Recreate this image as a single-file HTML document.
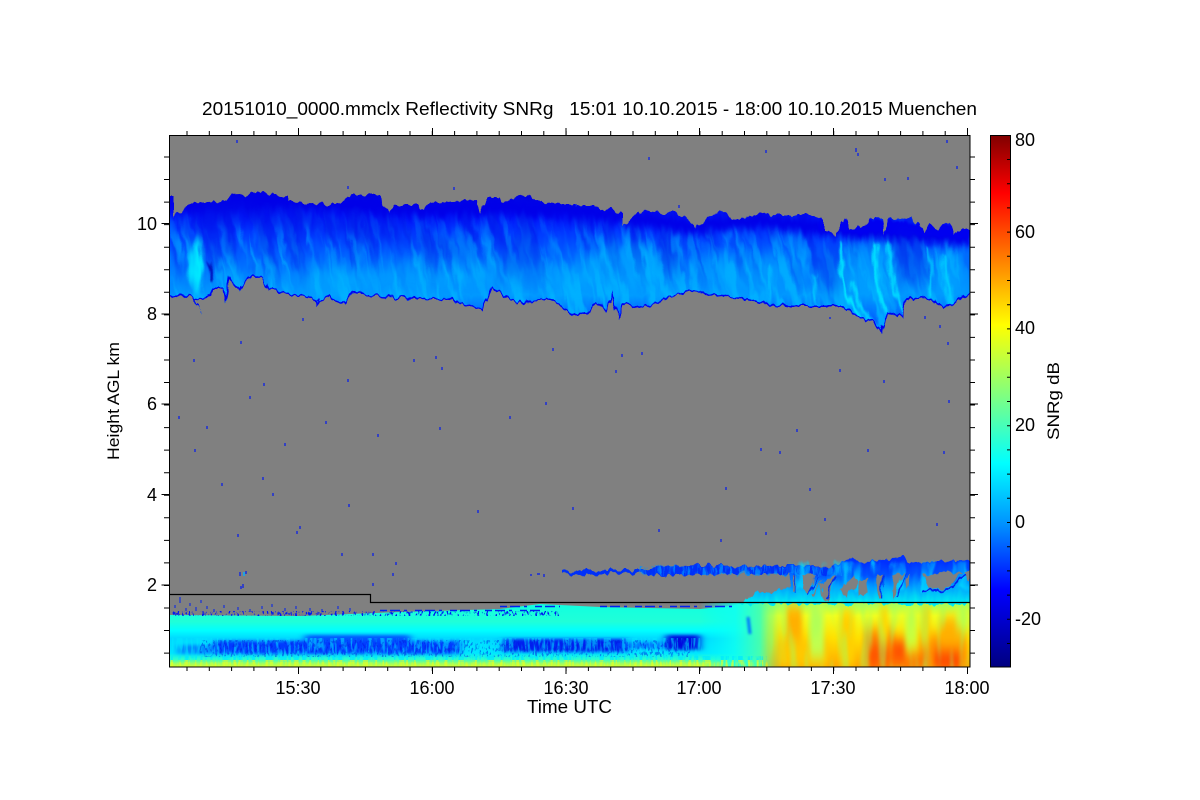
<!DOCTYPE html>
<html><head><meta charset="utf-8"><title>SNRg</title>
<style>
html,body{margin:0;padding:0;background:#fff}
svg{display:block}
text{font-family:"Liberation Sans",sans-serif;fill:#000;font-size:18px}
</style></head><body>
<svg xmlns="http://www.w3.org/2000/svg" width="1200" height="800" viewBox="0 0 1200 800">
<defs>
<linearGradient id="cb" gradientUnits="userSpaceOnUse" x1="0" y1="135" x2="0" y2="667">
<stop offset="0" stop-color="#800000"/><stop offset=".109" stop-color="#ff0000"/><stop offset=".235" stop-color="#ff8000"/><stop offset=".357" stop-color="#ffff00"/><stop offset=".489" stop-color="#80ff80"/><stop offset=".617" stop-color="#00ffff"/><stop offset=".733" stop-color="#0090ff"/><stop offset=".856" stop-color="#0000ff"/><stop offset="1" stop-color="#000080"/>
</linearGradient>
<linearGradient id="cl" gradientUnits="userSpaceOnUse" x1="0" y1="195" x2="0" y2="320">
<stop offset="0" stop-color="#0000e0"/><stop offset=".16" stop-color="#0010f8"/><stop offset=".3" stop-color="#0038ff"/><stop offset=".48" stop-color="#0060ff"/><stop offset=".66" stop-color="#0084ff"/><stop offset=".8" stop-color="#0098ff"/><stop offset="1" stop-color="#0060ff"/>
</linearGradient>
<linearGradient id="low" gradientUnits="userSpaceOnUse" x1="0" y1="604" x2="0" y2="667">
<stop offset="0" stop-color="#10ffe0"/><stop offset=".28" stop-color="#20ffd8"/><stop offset=".42" stop-color="#00ffff"/><stop offset=".55" stop-color="#00d8ff"/><stop offset=".78" stop-color="#00e8ff"/><stop offset=".88" stop-color="#30ffc8"/><stop offset=".95" stop-color="#a0ff60"/><stop offset="1" stop-color="#d0ff30"/>
</linearGradient>
<linearGradient id="warm" gradientUnits="userSpaceOnUse" x1="0" y1="603" x2="0" y2="667">
<stop offset="0" stop-color="#a0ff60"/><stop offset=".2" stop-color="#f0ff20"/><stop offset=".55" stop-color="#ffe000"/><stop offset="1" stop-color="#ffa800"/>
</linearGradient>
<linearGradient id="fade" gradientUnits="userSpaceOnUse" x1="760" y1="0" x2="782" y2="0">
<stop offset="0" stop-color="#fff" stop-opacity="0"/><stop offset="1" stop-color="#fff"/>
</linearGradient>
<mask id="fm" maskUnits="userSpaceOnUse" x="700" y="600" width="280" height="70"><rect x="700" y="600" width="280" height="70" fill="url(#fade)"/></mask>
<linearGradient id="mix" gradientUnits="userSpaceOnUse" x1="700" y1="0" x2="770" y2="0">
<stop offset="0" stop-color="#00ffff" stop-opacity="0"/><stop offset=".5" stop-color="#10fff0" stop-opacity=".85"/><stop offset="1" stop-color="#60ff90"/>
</linearGradient>
<linearGradient id="lc" gradientUnits="userSpaceOnUse" x1="0" y1="562" x2="0" y2="604">
<stop offset="0" stop-color="#0030ff"/><stop offset=".3" stop-color="#0050ff"/><stop offset=".6" stop-color="#00a0ff"/><stop offset="1" stop-color="#00f0f0"/>
</linearGradient>
<linearGradient id="mL" gradientUnits="userSpaceOnUse" x1="0" y1="205" x2="0" y2="300">
<stop offset="0" stop-color="#fff" stop-opacity="0"/><stop offset=".4" stop-color="#fff" stop-opacity=".55"/><stop offset="1" stop-color="#fff" stop-opacity=".85"/>
</linearGradient>
<linearGradient id="mD" gradientUnits="userSpaceOnUse" x1="0" y1="210" x2="0" y2="295">
<stop offset="0" stop-color="#fff" stop-opacity=".6"/><stop offset=".6" stop-color="#fff" stop-opacity=".35"/><stop offset="1" stop-color="#fff" stop-opacity="0"/>
</linearGradient>
<mask id="mask1" maskUnits="userSpaceOnUse" x="160" y="180" width="820" height="160"><rect x="160" y="180" width="820" height="160" fill="url(#mL)"/></mask>
<mask id="mask2" maskUnits="userSpaceOnUse" x="160" y="180" width="820" height="160"><rect x="160" y="180" width="820" height="160" fill="url(#mD)"/></mask>
<filter id="b1" filterUnits="userSpaceOnUse" x="100" y="100" width="1000" height="620" color-interpolation-filters="sRGB"><feGaussianBlur stdDeviation="1.3"/></filter>
<filter id="b2" filterUnits="userSpaceOnUse" x="100" y="100" width="1000" height="620" color-interpolation-filters="sRGB"><feGaussianBlur stdDeviation="2 4"/></filter>
<filter id="bf" filterUnits="userSpaceOnUse" x="100" y="100" width="1000" height="620" color-interpolation-filters="sRGB"><feGaussianBlur stdDeviation="2.5 7"/></filter>
<filter id="bb" filterUnits="userSpaceOnUse" x="100" y="100" width="1000" height="620" color-interpolation-filters="sRGB"><feGaussianBlur stdDeviation="4 1.5"/></filter>
<filter id="b4" filterUnits="userSpaceOnUse" x="100" y="100" width="1000" height="620" color-interpolation-filters="sRGB"><feGaussianBlur stdDeviation="7"/></filter>
<filter id="jag" filterUnits="userSpaceOnUse" x="100" y="100" width="1000" height="620" color-interpolation-filters="sRGB"><feTurbulence type="fractalNoise" baseFrequency=".16 .05" numOctaves="2" seed="5" result="n"/><feDisplacementMap in="SourceGraphic" in2="n" scale="9" xChannelSelector="G" yChannelSelector="R"/></filter>
<filter id="ns" filterUnits="userSpaceOnUse" x="-200" y="-200" width="1600" height="1200" color-interpolation-filters="sRGB"><feTurbulence type="fractalNoise" baseFrequency=".11 .012" numOctaves="3" seed="8"/><feColorMatrix type="matrix" values="0 0 0 0 0 0 0 0 0 0 0 0 0 0 0 5 0 0 0 -2.2" result="a"/><feComposite in="SourceGraphic" in2="a" operator="in"/><feGaussianBlur stdDeviation=".6"/></filter>
<filter id="ns2" filterUnits="userSpaceOnUse" x="-200" y="-200" width="1600" height="1200" color-interpolation-filters="sRGB"><feTurbulence type="fractalNoise" baseFrequency=".07 .01" numOctaves="3" seed="21"/><feColorMatrix type="matrix" values="0 0 0 0 0 0 0 0 0 0 0 0 0 0 0 5 0 0 0 -2.4" result="a"/><feComposite in="SourceGraphic" in2="a" operator="in"/><feGaussianBlur stdDeviation=".8"/></filter>
<filter id="nv" filterUnits="userSpaceOnUse" x="100" y="550" width="1000" height="130" color-interpolation-filters="sRGB"><feTurbulence type="fractalNoise" baseFrequency=".35 .06" numOctaves="2" seed="3"/><feColorMatrix type="matrix" values="0 0 0 0 0 0 0 0 0 0 0 0 0 0 0 5 0 0 0 -2.2" result="a"/><feComposite in="SourceGraphic" in2="a" operator="in"/></filter>
<filter id="nf" filterUnits="userSpaceOnUse" x="100" y="550" width="1000" height="130" color-interpolation-filters="sRGB"><feTurbulence type="fractalNoise" baseFrequency=".1 .018" numOctaves="2" seed="14"/><feColorMatrix type="matrix" values="0 0 0 0 0 0 0 0 0 0 0 0 0 0 0 5 0 0 0 -2.3" result="a"/><feComposite in="SourceGraphic" in2="a" operator="in"/><feGaussianBlur stdDeviation="1"/></filter>
<filter id="nd" filterUnits="userSpaceOnUse" x="100" y="550" width="1000" height="130" color-interpolation-filters="sRGB"><feTurbulence type="fractalNoise" baseFrequency=".45 .25" numOctaves="2" seed="9"/><feColorMatrix type="matrix" values="0 0 0 0 0 0 0 0 0 0 0 0 0 0 0 8 0 0 0 -4.3" result="a"/><feComposite in="SourceGraphic" in2="a" operator="in"/></filter>
<clipPath id="plot"><rect x="170" y="136" width="800" height="531"/></clipPath>
<clipPath id="cloud"><polygon points="169,195 173,195 173,217 185,208 190,203 223,202 233,195 267,193 287,197 290,202 337,205 353,195 380,195 383,203 390,213 395,205 417,205 422,210 430,203 477,200 480,213 487,198 500,198 503,203 517,197 527,195 543,203 560,205 593,205 600,210 610,209 623,215 623,227 640,210 650,212 660,213 677,213 687,218 697,228 710,215 725,213 733,220 747,217 763,213 777,215 813,215 823,220 823,230 837,235 845,218 850,230 867,223 872,218 883,218 885,235 888,220 910,218 920,223 923,232 930,223 937,230 948,222 953,235 958,230 970,230 975,230 975,293 970,293 953,305 943,307 927,298 907,300 903,318 888,312 881,333 873,322 853,315 843,307 787,307 727,297 693,292 667,298 650,307 637,310 625,305 619,320 613,297 608,313 597,303 585,315 570,313 568,312 550,300 518,303 503,297 493,288 483,312 472,308 450,300 383,298 353,293 342,305 327,297 318,305 317,300 297,295 268,290 263,277 250,278 240,290 230,280 225,302 222,290 213,290 210,297 195,300 200,313 192,298 165,295 165,195"/></clipPath>
</defs>

<rect width="1200" height="800" fill="#fff"/>
<rect x="169" y="135" width="801" height="532" fill="#808080"/>

<g clip-path="url(#plot)">
<!-- upper cloud -->
<g filter="url(#jag)">
<g clip-path="url(#cloud)">
<rect x="160" y="180" width="820" height="160" fill="url(#cl)"/>
<!-- broad soft tone -->
<g filter="url(#b4)" fill="#00a8ff">
<ellipse cx="420" cy="276" rx="60" ry="14" opacity=".6"/>
<ellipse cx="335" cy="282" rx="35" ry="15" opacity=".75"/>
<ellipse cx="625" cy="268" rx="48" ry="24" opacity=".8"/>
<ellipse cx="510" cy="275" rx="50" ry="15" opacity=".6"/>
<ellipse cx="745" cy="270" rx="55" ry="18" opacity=".6"/>
<ellipse cx="570" cy="285" rx="18" ry="15" opacity=".7"/>
<ellipse cx="880" cy="268" rx="42" ry="28" opacity=".65"/>
<ellipse cx="950" cy="270" rx="16" ry="24" opacity=".7"/>
</g>
<!-- streak texture -->
<g mask="url(#mask1)">
<g transform="rotate(-14 570 260)">
<rect x="0" y="40" width="1150" height="440" fill="#00b4ff" filter="url(#ns)"/>
</g>
</g>
<g mask="url(#mask2)">
<g transform="rotate(-14 570 260)">
<rect x="0" y="40" width="1150" height="440" fill="#0010e8" filter="url(#ns2)"/>
</g>
</g>
<!-- dark top edge -->
<path d="M169,203 L223,207 L267,198 L353,203 L380,205 L430,210 L500,206 L600,213 L690,226 L763,220 L823,228 L885,232 L970,238" fill="none" stroke="#0000e8" stroke-width="15" filter="url(#b2)"/>
<path d="M820,224 L970,232" fill="none" stroke="#0000f0" stroke-width="14" filter="url(#b1)"/>
<g filter="url(#b4)" fill="#0018e8">
<ellipse cx="340" cy="226" rx="70" ry="8" opacity=".55" transform="rotate(10 340 226)"/>
<ellipse cx="440" cy="245" rx="28" ry="7" opacity=".45" transform="rotate(30 440 245)"/>
<ellipse cx="830" cy="270" rx="7" ry="26" opacity=".6"/>
<ellipse cx="670" cy="258" rx="7" ry="18" opacity=".5" transform="rotate(-25 670 258)"/>
<ellipse cx="905" cy="258" rx="5" ry="28" opacity=".75"/>
<ellipse cx="920" cy="262" rx="5" ry="28" opacity=".6"/>
<ellipse cx="230" cy="215" rx="30" ry="10" opacity=".45"/>
</g>
<!-- bright features -->
<g filter="url(#b2)" fill="#00ecff">
<ellipse cx="198" cy="264" rx="4" ry="27"/>
<ellipse cx="191" cy="270" rx="3.5" ry="16" opacity=".7"/>
</g>
<path d="M209,262 L212,282" stroke="#0000b0" stroke-width="3" filter="url(#b1)"/>
<g fill="none" stroke="#00f0ff" filter="url(#b1)" stroke-linecap="round">
<path d="M841,245 C841,270 843,290 852,305 L862,318" stroke-width="3.5"/>
<path d="M853,282 C854,300 862,312 878,328" stroke-width="2.8" opacity=".9"/>
<path d="M875,245 C874,270 877,295 886,310" stroke-width="3.5" opacity=".9"/>
<path d="M889,243 C889,265 892,290 905,314" stroke-width="3.5" opacity=".8"/>
<path d="M929,248 L931,295" stroke-width="2.8" opacity=".75"/>
<path d="M945,255 C945,275 948,295 952,305" stroke-width="4.5" opacity=".6"/>
<path d="M814,275 L816,300" stroke-width="2.5" opacity=".6"/>
<path d="M769,265 L770,300" stroke-width="2.5" opacity=".5"/>
</g>
<!-- dark lower edge -->
<path d="M169,295 L192,298 L200,313 L195,300 L210,297 L213,290 L222,290 L225,302 L230,280 L240,290 L250,278 L263,277 L268,290 L297,295 L317,300 L318,305 L327,297 L342,305 L353,293 L383,298 L450,300 L472,308 L483,312 L493,288 L503,297 L518,303 L550,300 L568,312 L585,315 L597,303 L608,313 L613,297 L619,320 L625,305 L637,310 L650,307 L667,298 L693,292 L727,297 L787,307 L843,307 L853,315 L873,322 L881,333 L888,312 L903,318 L907,300 L927,298 L943,307 L953,305 L970,293" fill="none" stroke="#0000f0" stroke-width="3"/>
</g>
</g>

<!-- lower layer -->
<polygon points="169,615 300,616 400,612 500,609 540,604 600,607 700,609 730,606 742,603 970,603 970,667 169,667" fill="url(#low)"/>
<rect x="700" y="603" width="100" height="64" fill="url(#mix)"/>
<!-- dark band left -->
<g filter="url(#bb)">
<rect x="178" y="645" width="42" height="9" fill="#0070ff" opacity=".8"/>
<rect x="215" y="641" width="245" height="13" fill="#0030ff" opacity=".95"/>
<rect x="305" y="635" width="105" height="9" fill="#0040ff" opacity=".85"/>
<rect x="503" y="639" width="125" height="13" fill="#0020f0"/>
<rect x="620" y="642" width="50" height="7" fill="#0060ff" opacity=".8"/>
<rect x="666" y="635" width="34" height="15" fill="#0008e0"/>
</g>
<path d="M748,617 L750,634" stroke="#0070ff" stroke-width="3" filter="url(#b1)"/>
<rect x="172" y="638" width="530" height="20" fill="#00e8ff" opacity=".55" filter="url(#nv)"/>
<rect x="200" y="640" width="490" height="17" fill="#0018e0" opacity=".45" filter="url(#nd)"/>
<rect x="170" y="656" width="600" height="6" fill="#00e8ff" opacity=".7" filter="url(#nv)"/>
<rect x="170" y="660" width="600" height="7" fill="#e8ff20" opacity=".7" filter="url(#nv)"/>
<!-- right warm region -->
<g mask="url(#fm)">
<rect x="750" y="603" width="220" height="64" fill="url(#warm)"/>
<g filter="url(#bf)">
<rect x="786" y="606" width="16" height="60" fill="#ffb000"/>
<rect x="778" y="640" width="50" height="27" fill="#ffc800"/>
<rect x="810" y="603" width="14" height="55" fill="#c0ff50"/>
<rect x="840" y="610" width="14" height="56" fill="#ffd000"/>
<rect x="864" y="630" width="30" height="40" fill="#ff8000"/>
<rect x="870" y="645" width="18" height="26" fill="#ff5000"/>
<rect x="880" y="604" width="8" height="40" fill="#ffd800"/>
<rect x="893" y="640" width="12" height="30" fill="#ff4800"/>
<rect x="905" y="608" width="12" height="40" fill="#c8ff40"/>
<rect x="920" y="635" width="46" height="36" fill="#ff9000"/>
<rect x="922" y="604" width="8" height="40" fill="#ffd000"/>
<rect x="940" y="618" width="22" height="30" fill="#ffb000"/>
<rect x="934" y="652" width="26" height="18" fill="#ff4000"/>
<rect x="876" y="656" width="52" height="14" fill="#ff6800"/>
<rect x="956" y="605" width="14" height="24" fill="#c8ff40"/>
</g>
<rect x="770" y="603" width="200" height="64" fill="#a0ff60" opacity=".42" filter="url(#nf)"/>
</g>

<!-- low cloud right -->
<g filter="url(#jag)">
<polygon points="738,604 747,600 757,592 773,592 787,588 790,572 837,565 852,557 860,563 903,557 913,563 975,560 975,604" fill="url(#lc)"/>
<polygon points="563,572 575,573 582,570 640,570 660,567 700,565 740,566 790,565 835,566 835,575 790,574 740,573 700,575 660,576 640,573 600,574 580,576 563,575" fill="#0030f8"/>
<rect x="640" y="566" width="200" height="9" fill="#0090ff" opacity=".8" filter="url(#nv)"/>
<rect x="790" y="562" width="180" height="28" fill="#00d8ff" opacity=".8" filter="url(#nf)"/>
<g fill="#808080">
<polygon points="923,575 960,572 952,585 940,590 930,589"/>
<polygon points="793,576 797,576 796,590 792,590"/>
<polygon points="803,575 815,574 806,594 802,590"/>
<polygon points="820,585 835,575 830,598 825,603 822,592"/>
<polygon points="810,594 824,578 812,596"/>
<polygon points="858,583 868,578 867,593 860,595"/>
<polygon points="877,575 882,575 881,598 878,598"/>
<polygon points="893,576 903,571 896,588 893,600 891,590"/>
<polygon points="905,580 912,574 907,590"/>
<polygon points="840,590 855,575 857,584 846,597"/>
<polygon points="962,572 970,570 970,582 966,580"/>
</g>
<path d="M925,590 L940,592 L955,586 L963,574" fill="none" stroke="#0020f0" stroke-width="2"/>
<path d="M795,574 V592 M818,576 L806,594 M835,576 L826,600 M882,575 V598 M905,572 L896,598" fill="none" stroke="#0030f0" stroke-width="1.5"/>
</g>

<!-- ground-level speckle -->
<rect x="172" y="611" width="390" height="5" fill="#0018f0" filter="url(#nd)"/>
<path d="M380,610.5 H540 M500,606.5 H560 M600,606.5 H735" fill="none" stroke="#0020f0" stroke-width="1.5" stroke-dasharray="7 3 10 4 3 8"/>
<path d="M180,603 V597 M201,603 V600 M190,606 V603 M175,605 v3 M186,608 v3 M196,607 v4 M207,606 v3 M214,609 v3 M224,605 v3 M238,607 v3 M250,609 v3 M262,606 v3 M272,604 v3 M285,608 v3 M296,606 v3 M310,608 v3 M322,609 v3 M338,606 v3 M350,608 v3" fill="none" stroke="#0020f0"/>
<!-- isolated specks -->
<path d="M237,140v3M649,157v3M856,148v4M858,153v3M885,178v3M908,177v3M947,140v3M957,166v3M766,150v3M194,359v3M241,341v3M264,383v3M250,396v3M179,416v3M207,426v3M326,421v3M195,449v3M285,443v3M348,379v3M414,359v3M436,356v3M442,367v3M553,348v3M616,370v3M622,354v3M642,352v3M510,416v3M546,402v3M222,483v3M263,477v3M273,493v3M238,534v3M300,526v3M297,531v3M349,504v3M378,434v3M440,427v3M478,510v3M573,507v3M659,529v3M726,487v3M761,448v3M780,451v3M797,429v3M840,369v3M884,380v3M868,449v3M810,488v3M825,518v3M766,532v3M721,539v3M937,523v3M948,342v3M949,400v3M944,451v3M342,553v3M373,553v3M396,562v3M393,573v3M373,583v3M240,572v4M246,571v3M243,584v4M241,586v3M531,574v2M537,574h3M544,574v3M303,318v3M830,317v2M925,316v3M348,186v3M454,187v3M940,325v3M679,205v3M576,204v3" fill="none" stroke="#0018f0" stroke-width="1.2"/>
<path d="M244,572v4" stroke="#00b0ff" stroke-width="1.5"/>
<!-- ground line -->
<polyline points="169,594.5 370.5,594.5 370.5,602.5 970,602.5" fill="none" stroke="#000" stroke-width="1.2"/>
</g>

<!-- plot frame & ticks -->
<rect x="169.5" y="135.5" width="800.5" height="531.5" fill="none" stroke="#000" stroke-width="1"/>
<g fill="none" stroke="#000">
<path d="M166.5,156.5 V667" stroke-width="5" stroke-dasharray="1 21.55"/>
<path d="M161.5,223.5 h8 M161.5,314 h8 M161.5,404 h8 M161.5,494.5 h8 M161.5,585 h8" stroke-width="1"/>
<path d="M972.5,156.5 V667" stroke-width="5" stroke-dasharray="1 21.55"/>
<path d="M970,223.5 h8 M970,314 h8 M970,404 h8 M970,494.5 h8 M970,585 h8" stroke-width="1"/>
<path d="M186.5,669 H960" stroke-width="4" stroke-dasharray="1 21.3"/>
<path d="M186.5,133 H960" stroke-width="4" stroke-dasharray="1 21.3"/>
<path d="M298.5,667 v7 M432.5,667 v7 M566,667 v7 M699.5,667 v7 M833.5,667 v7 M967.5,667 v7" stroke-width="1"/>
<path d="M298.5,128 v7 M432.5,128 v7 M566,128 v7 M699.5,128 v7 M833.5,128 v7 M967.5,128 v7" stroke-width="1"/>
</g>

<!-- colour bar -->
<rect x="990.5" y="135.5" width="20" height="531.5" fill="url(#cb)" stroke="#000" stroke-width="1"/>
<path d="M1008.5,159 V667" fill="none" stroke="#000" stroke-width="3" stroke-dasharray="1 23.2"/>

<!-- text -->
<text x="202" y="115" xml:space="preserve" textLength="775" lengthAdjust="spacingAndGlyphs">20151010_0000.mmclx Reflectivity SNRg   15:01 10.10.2015 - 18:00 10.10.2015 Muenchen</text>
<g text-anchor="end">
<text x="157" y="230">10</text><text x="157" y="320">8</text><text x="157" y="410">6</text><text x="157" y="501">4</text><text x="157" y="591">2</text>
</g>
<g text-anchor="middle">
<text x="298" y="694">15:30</text><text x="432" y="694">16:00</text><text x="566" y="694">16:30</text><text x="699" y="694">17:00</text><text x="833" y="694">17:30</text><text x="967" y="694">18:00</text>
</g>
<text x="527" y="713" textLength="85" lengthAdjust="spacingAndGlyphs">Time UTC</text>
<g>
<text x="1015" y="146">80</text><text x="1015" y="238">60</text><text x="1015" y="334">40</text><text x="1015" y="431">20</text><text x="1015" y="528">0</text><text x="1015" y="625">-20</text>
</g>
<text transform="translate(119 460) rotate(-90)" style="font-size:17px" textLength="118" lengthAdjust="spacingAndGlyphs">Height AGL km</text>
<text transform="translate(1059 440) rotate(-90)" style="font-size:17px" textLength="78" lengthAdjust="spacingAndGlyphs">SNRg dB</text>
</svg>
</body></html>
